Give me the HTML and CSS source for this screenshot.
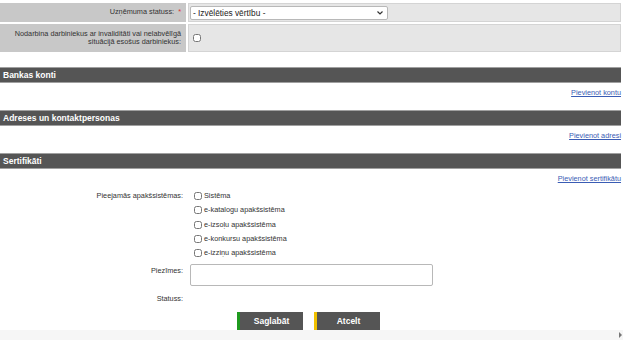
FILE: index.html
```html
<!DOCTYPE html>
<html lang="lv">
<head>
    <meta charset="UTF-8">
    <meta name="viewport" content="width=device-width, initial-scale=1.0">
    <title>Uzņēmuma dati</title>
    <link rel="stylesheet" href="styles.css">
</head>
<body>
    <div class="form-grid">
        <div class="cell label">Uzņēmuma statuss:<span class="req">*</span></div>
        <div class="cell value">
            <span class="select-wrap">
                <select class="select">
                    <option>- Izvēlēties vērtību -</option>
                </select>
                <svg class="chevron" width="6" height="4" viewBox="0 0 6 4"><path d="M0.5 0.5 L3 3 L5.5 0.5" fill="none" stroke="#333" stroke-width="1.2"/></svg>
            </span>
        </div>
        <div class="cell label">Nodarbina darbiniekus ar invaliditāti vai nelabvēlīgā situācijā esošus darbiniekus:</div>
        <div class="cell value"><input type="checkbox" class="check"></div>
    </div>

    <div class="section">
        <div class="section-title">Bankas konti</div>
        <div class="section-links"><a href="#">Pievienot kontu</a></div>
    </div>

    <div class="section">
        <div class="section-title">Adreses un kontaktpersonas</div>
        <div class="section-links"><a href="#">Pievienot adresi</a></div>
    </div>

    <div class="section">
        <div class="section-title">Sertifikāti</div>
        <div class="section-links"><a href="#">Pievienot sertifikātu</a></div>
    </div>

    <div class="cert-form">
        <div class="cert-label">Pieejamās apakšsistēmas:</div>
        <div class="check-list">
            <label><input type="checkbox" class="check">Sistēma</label>
            <label><input type="checkbox" class="check">e-katalogu apakšsistēma</label>
            <label><input type="checkbox" class="check">e-izsoļu apakšsistēma</label>
            <label><input type="checkbox" class="check">e-konkursu apakšsistēma</label>
            <label><input type="checkbox" class="check">e-izziņu apakšsistēma</label>
        </div>
        <div class="cert-label">Piezīmes:</div>
        <div><textarea class="notes"></textarea></div>
        <div class="cert-label">Statuss:</div>
        <div></div>
    </div>

    <div class="actions">
        <button class="btn save">Saglabāt</button>
        <button class="btn cancel">Atcelt</button>
    </div>

    <div class="hscroll"><span class="arrow"></span></div>
</body>
</html>
```

FILE: styles.css
```css
body {
    font-family: 'Liberation Sans', Arial, sans-serif;
    font-size: 7.3px;
    color: #333;
    margin: 0;
    padding-right: 2px;
    background: #fff;
    overflow: hidden;
}
.form-grid {
    display: grid;
    grid-template-columns: 186px 1fr;
    grid-template-rows: 19px 28px;
    gap: 2px;
    margin-top: 3px;
}
.cell {
    display: flex;
    align-items: center;
}
.label {
    background: #c8c8c8;
    justify-content: flex-end;
    text-align: right;
    padding: 0 5px 0 8px;
    line-height: 8.5px;
}
.value {
    background: #e6e6e6;
    border: 1px solid #d4d4d4;
    padding: 0 1px;
}
.req {
    color: #e03030;
    margin-left: 4px;
}
.select-wrap {
    position: relative;
    display: inline-block;
}
.select {
    appearance: none;
    width: 198px;
    height: 14px;
    font-family: inherit;
    font-size: 8.3px;
    padding: 0 2px;
    border: 1px solid #b8b8b8;
    border-radius: 2px;
    background: #fff;
    color: #222;
    display: block;
}
.chevron {
    position: absolute;
    right: 5px;
    top: 5px;
}
.check {
    width: 8px;
    height: 8px;
    margin: 0 2px 0 0;
    vertical-align: middle;
}
.value .check {
    margin-left: 3px;
}
.section {
    margin-top: 12px;
}
.form-grid + .section {
    margin-top: 15px;
}
.section-title {
    background: #555;
    color: #fff;
    font-weight: bold;
    font-size: 8.5px;
    height: 14px;
    line-height: 14px;
    padding-left: 3px;
    border-top: 1px solid #a0a0a0;
    border-bottom: 1px solid #a0a0a0;
}
.section-links {
    text-align: right;
    padding-top: 5px;
    height: 10px;
    line-height: 10px;
}
.section-links a {
    color: #3a5cb4;
}
.cert-form {
    display: grid;
    grid-template-columns: 183px 1fr;
    column-gap: 11px;
    row-gap: 6px;
    margin-top: 7px;
}
.cert-label {
    text-align: right;
    line-height: 10.3px;
}
.cert-label:nth-child(3),
.cert-label:nth-child(5) {
    padding-top: 2px;
}
.check-list {
    display: flex;
    flex-direction: column;
    gap: 4px;
}
.check-list label {
    line-height: 10.3px;
}
.notes {
    display: block;
    width: 243px;
    height: 22px;
    border: 1px solid #b8b8b8;
    border-radius: 2px;
    resize: none;
    box-sizing: border-box;
    margin-left: -4px;
}
.actions {
    display: flex;
    gap: 11px;
    padding-left: 237px;
    margin-top: 7px;
}
.btn {
    width: 66px;
    height: 18px;
    padding: 0;
    background: #555;
    color: #fff;
    font-family: inherit;
    font-weight: bold;
    font-size: 8.5px;
    border: none;
    border-left: 3px solid #1f9a1f;
    cursor: pointer;
}
.btn.cancel {
    border-left-color: #f2c200;
}
.hscroll {
    position: fixed;
    left: 0;
    right: 0;
    bottom: 0;
    height: 10px;
    background: #f6f6f6;
}
.arrow {
    position: absolute;
    right: 1px;
    top: 2px;
    border-left: 3px solid #777;
    border-top: 3px solid transparent;
    border-bottom: 3px solid transparent;
}
```
